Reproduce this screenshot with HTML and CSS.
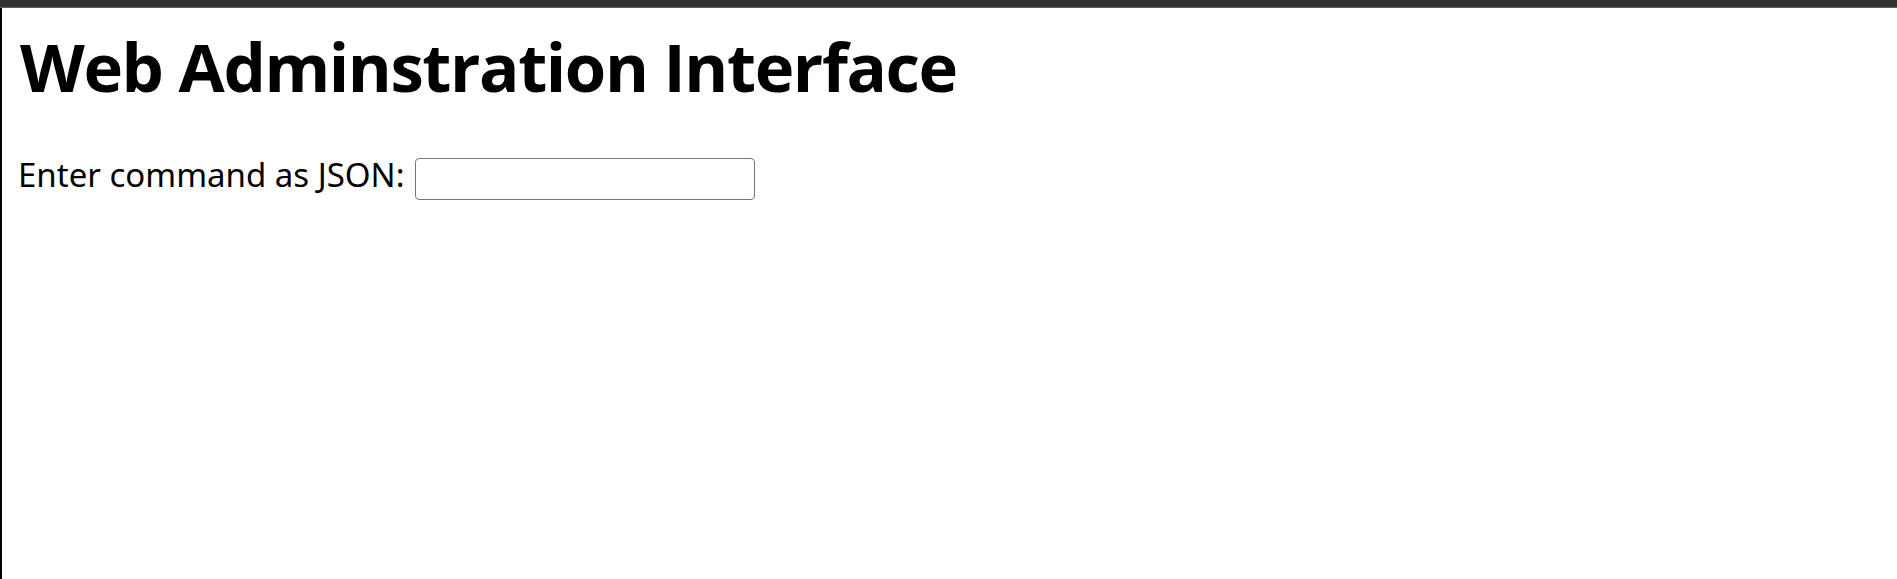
FILE: index.html
```html
<!DOCTYPE html>
<html lang="en">
<head>
<meta charset="utf-8">
<title>Web Adminstration Interface</title>
<link rel="stylesheet" href="styles.css">
</head>
<body>
<div class="topbar"></div>
<main class="page">
  <h1 class="title">Web Adminstration Interface</h1>
  <form class="command-row">
    <label class="command-label" for="cmd">Enter command as JSON:</label>
    <input class="command-input" id="cmd" type="text">
  </form>
</main>
</body>
</html>
```
FILE: styles.css
```css
html, body {
  margin: 0;
  padding: 0;
  height: 100%;
  background: #fff;
}
body {
  display: flex;
  flex-direction: column;
  font-family: "Noto Sans", "Open Sans", sans-serif;
  color: #000;
}
.topbar {
  flex: none;
  height: 7px;
  background: #333333;
  border-bottom: 1px solid #5e5e5e;
}
.page {
  flex: 1;
  border-left: 2px solid #000;
  padding: 25px 0 0 16px;
}
.title {
  margin: 0 0 0 2px;
  font-family: "Open Sans", "Noto Sans", sans-serif;
  font-size: 67px;
  line-height: 67px;
  font-weight: 700;
  letter-spacing: -1.4px;
}
.command-row {
  display: flex;
  align-items: flex-start;
  margin: 58px 0 0 0;
}
.command-label {
  font-size: 33px;
  line-height: 33px;
}
.command-input {
  box-sizing: border-box;
  width: 340px;
  height: 42px;
  margin-left: 10px;
  border: 1.5px solid #767676;
  border-radius: 4px;
  background: #fff;
  padding: 2px 4px;
  font-size: 20px;
}
```
